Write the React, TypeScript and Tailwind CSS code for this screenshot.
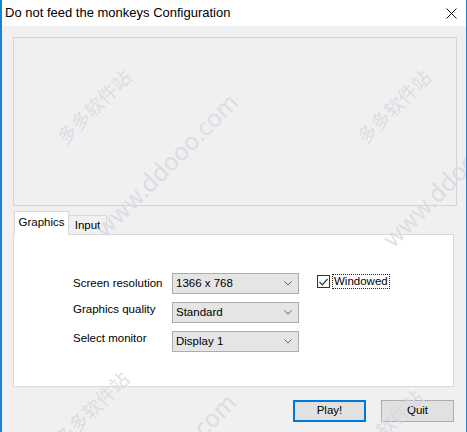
import { ReactNode } from "react";

const font = { fontFamily: '"Liberation Sans", Arial, sans-serif' };

function Combo({ value }: { value: string }) {
  return (
    <div className="flex h-[21px] w-[127px] items-center justify-between border border-[#adadad] bg-[#e5e5e5] pl-[3px] pr-[5px] text-[11.5px] text-black">
      <span>{value}</span>
      <svg width="8" height="5" viewBox="0 0 8 5" className="mr-[1px]">
        <path d="M0.5 0.5 L4 4 L7.5 0.5" fill="none" stroke="#606060" strokeWidth="1" />
      </svg>
    </div>
  );
}

function Mark({ x, y, size = 19, children }: { x: number; y: number; size?: number; children: ReactNode }) {
  return (
    <div
      className="pointer-events-none absolute origin-left -rotate-45 whitespace-nowrap text-[#d8d9e2] opacity-80"
      style={{ left: x, top: y, fontSize: size, fontFamily: '"Noto Sans CJK SC", sans-serif' }}
    >
      {children}
    </div>
  );
}

export default function App() {
  return (
    <div
      className="relative h-[432px] w-[467px] overflow-hidden border-l-2 border-r border-[#1a82d6] bg-[#f0f0f0]"
      style={font}
    >
      {/* title bar */}
      <div className="flex h-[26px] items-center justify-between bg-white pl-[3px] pr-[9px]">
        <span className="text-[13px] text-black">Do not feed the monkeys Configuration</span>
        <svg width="11" height="11" viewBox="0 0 11 11">
          <path d="M0.5 0.5 L10.5 10.5 M10.5 0.5 L0.5 10.5" stroke="#111" strokeWidth="1" />
        </svg>
      </div>

      {/* preview area */}
      <div className="ml-[11px] mr-[9px] mt-[11px] h-[169px] border border-[#d5d5d5] bg-[#f0f0f0]" />

      {/* tabs */}
      <div className="ml-[11px] mt-[4px] w-[441px]">
        <div className="flex h-[24px] items-end pl-[1px]">
          <div className="relative z-10 -mb-px flex h-[24px] w-[55px] items-center justify-center border border-b-0 border-[#d9d9d9] bg-white pb-[1px] text-[11.5px]">
            Graphics
          </div>
          <div className="flex h-[19px] w-[38px] items-center justify-center border border-b-0 border-l-0 border-[#d9d9d9] bg-[#f0f0f0] pt-[1px] text-[11.5px]">
            Input
          </div>
        </div>
        <div className="h-[153px] border border-[#d9d9d9] bg-white pl-[59px] pt-[38px] text-[11.5px]">
          <div className="flex">
            <div className="grid grid-cols-[99px_127px] gap-y-[8px]">
              <span className="leading-[21px]">Screen resolution</span>
              <Combo value="1366 x 768" />
              <span className="-mt-[3px] leading-[21px]">Graphics quality</span>
              <Combo value="Standard" />
              <span className="-mt-[3px] leading-[21px]">Select monitor</span>
              <Combo value="Display 1" />
            </div>
            <div className="ml-[18px] mt-[1px] flex h-[15px] items-center">
              <div className="flex h-[13px] w-[13px] items-center justify-center border border-[#333] bg-white">
                <svg width="9" height="8" viewBox="0 0 9 8">
                  <path d="M0.5 4 L3.3 6.8 L8.5 1" fill="none" stroke="#333" strokeWidth="1.2" />
                </svg>
              </div>
              <span className="ml-[2px] border border-dotted border-[#222] px-[1px] leading-[13px]">
                Windowed
              </span>
            </div>
          </div>
        </div>
      </div>

      {/* buttons */}
      <div className="mr-[12px] mt-[13px] flex justify-end gap-[15px] text-[11.5px]">
        <button className="h-[22px] w-[73px] border-2 border-[#0078d7] bg-[#e1e1e1]">Play!</button>
        <button className="h-[22px] w-[73px] border border-[#adadad] bg-[#e1e1e1]">Quit</button>
      </div>

      {/* watermarks */}
      <Mark x={58} y={126}>多多软件站</Mark>
      <Mark x={96} y={214} size={24}>www.ddooo.com</Mark>
      <Mark x={358} y={126}>多多软件站</Mark>
      <Mark x={384} y={224} size={24}>www.ddooo.com</Mark>
      <Mark x={56} y={428}>多多软件站</Mark>
      <Mark x={94} y={514} size={24}>www.ddooo.com</Mark>
      <Mark x={350} y={446}>多多软件站</Mark>
    </div>
  );
}
